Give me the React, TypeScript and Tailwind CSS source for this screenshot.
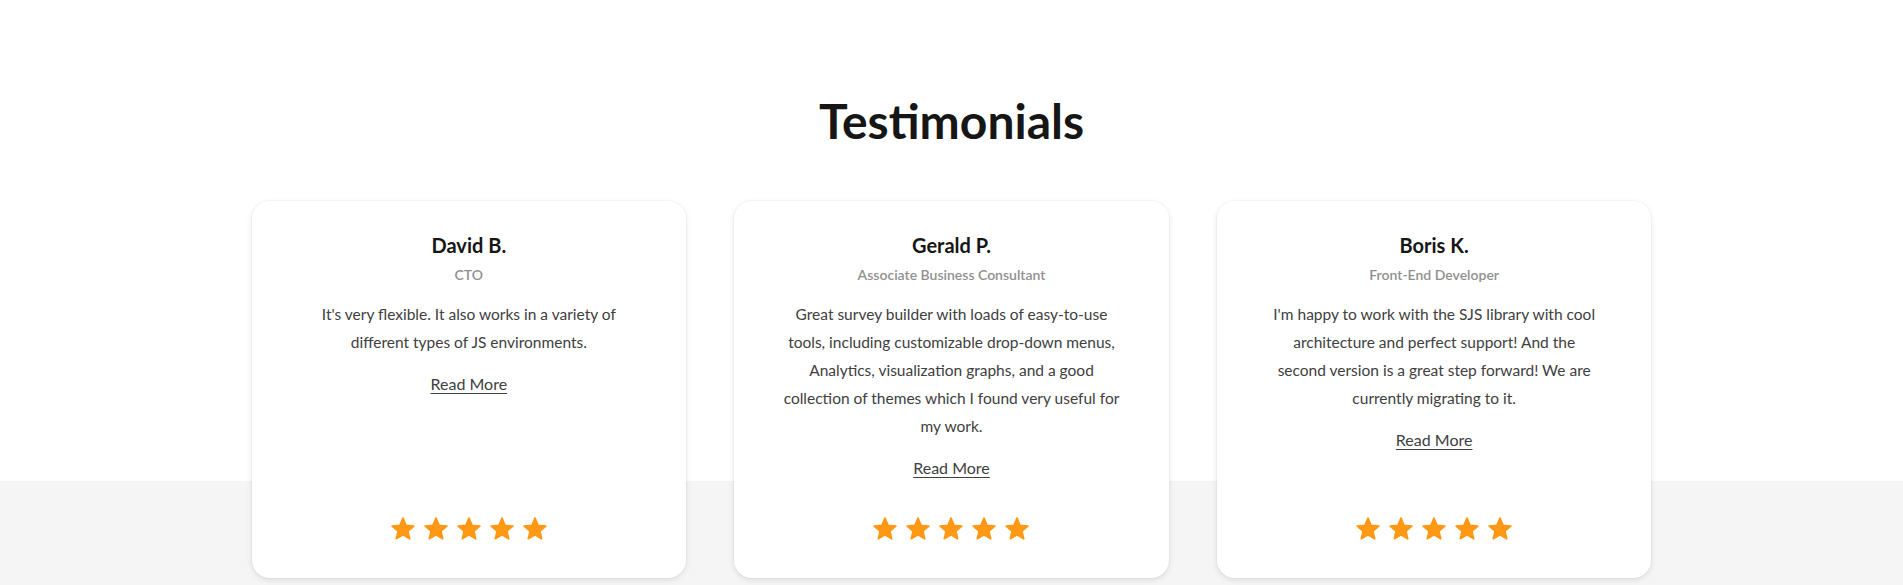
import React from "react";

type T = { name: string; role: string; text: string };

const items: T[] = [
  {
    name: "David B.",
    role: "CTO",
    text: "It's very flexible. It also works in a variety of different types of JS environments.",
  },
  {
    name: "Gerald P.",
    role: "Associate Business Consultant",
    text: "Great survey builder with loads of easy-to-use tools, including customizable drop-down menus, Analytics, visualization graphs, and a good collection of themes which I found very useful for my work.",
  },
  {
    name: "Boris K.",
    role: "Front-End Developer",
    text: "I'm happy to work with the SJS library with cool architecture and perfect support! And the second\u00a0version is a great step forward! We are currently migrating to it.",
  },
];

function Star() {
  return (
    <svg width="26" height="26" viewBox="0 0 24 24" aria-hidden="true">
      <path
        d="M12 17.27L18.18 21l-1.64-7.03L22 9.24l-7.19-.61L12 2 9.19 8.63 2 9.24l5.46 4.73L5.82 21z"
        fill="#FF9814"
        stroke="#FF9814"
        strokeWidth="1.6"
        strokeLinejoin="round"
      />
    </svg>
  );
}

function Card({ t }: { t: T }) {
  return (
    <div className="flex flex-col items-center rounded-[18px] bg-white px-[44px] pt-[32px] pb-[36px] text-center shadow-[0_2px_6px_rgba(0,0,0,0.10),0_0_0_1px_rgba(0,0,0,0.025)]">
      <div className="text-[20px] font-bold leading-[24px] text-[#161616]">{t.name}</div>
      <div className="mt-[8px] text-[14px] font-semibold leading-[20px] text-[#909090]">{t.role}</div>
      <p className="mt-[15px] text-[15.5px] leading-[28px] text-[#404040]">{t.text}</p>
      <a href="#" className="mt-[16px] text-[16px] leading-[24px] text-[#404040] underline underline-offset-[3px]">
        Read More
      </a>
      <div className="mt-auto flex gap-[7px] pt-[36px]">
        <Star />
        <Star />
        <Star />
        <Star />
        <Star />
      </div>
    </div>
  );
}

export default function App() {
  return (
    <div
      className="min-h-[585px] bg-[linear-gradient(to_bottom,#ffffff_481px,#f5f5f5_481px)] pt-[92px] pb-[8px]"
      style={{ fontFamily: "Lato, 'Open Sans', sans-serif" }}
    >
      <h2 className="text-center text-[48px] font-bold leading-[1.2] text-[#161616]">Testimonials</h2>
      <div className="mx-auto mt-[51px] grid w-[1400px] grid-cols-3 gap-[48px]">
        {items.map((t) => (
          <Card key={t.name} t={t} />
        ))}
      </div>
    </div>
  );
}
